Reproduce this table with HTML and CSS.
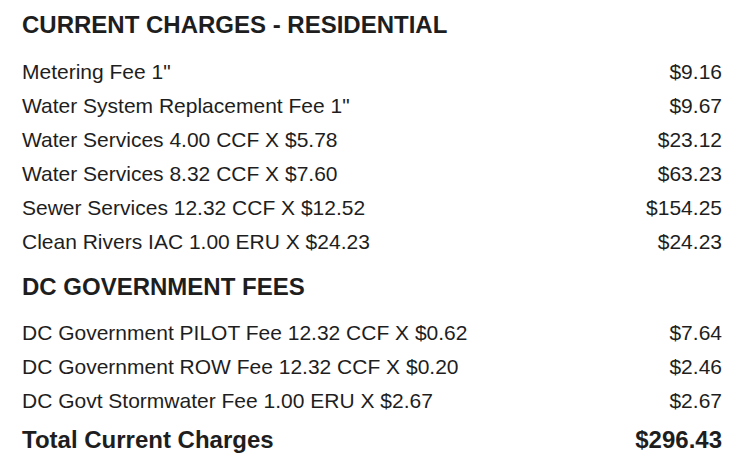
FILE: index.html
```html
<!DOCTYPE html>
<html>
<head>
<meta charset="utf-8">
<link rel="stylesheet" href="styles.css">
</head>
<body>
<div class="statement">
  <h2 class="section-title">CURRENT CHARGES - RESIDENTIAL</h2>
  <ul class="charges">
    <li class="row"><span>Metering Fee 1"</span><span>$9.16</span></li>
    <li class="row"><span>Water System Replacement Fee 1"</span><span>$9.67</span></li>
    <li class="row"><span>Water Services 4.00 CCF X $5.78</span><span>$23.12</span></li>
    <li class="row"><span>Water Services 8.32 CCF X $7.60</span><span>$63.23</span></li>
    <li class="row"><span>Sewer Services 12.32 CCF X $12.52</span><span>$154.25</span></li>
    <li class="row"><span>Clean Rivers IAC 1.00 ERU X $24.23</span><span>$24.23</span></li>
  </ul>
  <h2 class="section-title sub">DC GOVERNMENT FEES</h2>
  <ul class="charges">
    <li class="row"><span>DC Government PILOT Fee 12.32 CCF X $0.62</span><span>$7.64</span></li>
    <li class="row"><span>DC Government ROW Fee 12.32 CCF X $0.20</span><span>$2.46</span></li>
    <li class="row"><span>DC Govt Stormwater Fee 1.00 ERU X $2.67</span><span>$2.67</span></li>
  </ul>
  <div class="row total"><span>Total Current Charges</span><span>$296.43</span></div>
</div>
</body>
</html>
```
FILE: styles.css
```css
html, body {
  margin: 0;
  padding: 0;
  background: #ffffff;
}
body {
  font-family: "Liberation Sans", Arial, sans-serif;
  color: #1e1e1e;
}
.statement {
  padding: 8px 34px 0 22px;
}
.section-title {
  margin: 0;
  font-size: 24px;
  font-weight: bold;
  line-height: 34px;
}
.section-title.sub {
  margin-top: 11px;
}
.charges {
  list-style: none;
  margin: 13px 0 0;
  padding: 0;
}
.section-title.sub + .charges {
  margin-top: 12px;
}
.row {
  display: flex;
  justify-content: space-between;
  font-size: 21px;
  line-height: 34px;
}
.total {
  margin-top: 5px;
  font-weight: bold;
  font-size: 24px;
}
```
